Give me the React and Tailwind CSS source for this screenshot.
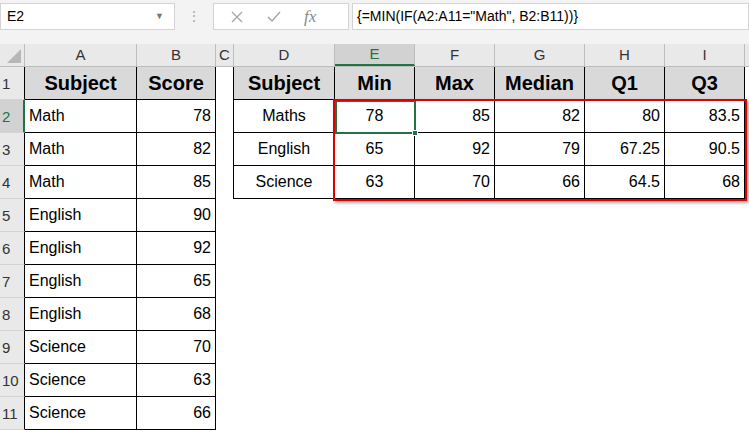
import React from 'react';

const cols = [
  { k: 'A', w: 'w-[112px]' },
  { k: 'B', w: 'w-[79px]' },
  { k: 'C', w: 'w-[18px]' },
  { k: 'D', w: 'w-[101px]' },
  { k: 'E', w: 'w-[80px]' },
  { k: 'F', w: 'w-[80px]' },
  { k: 'G', w: 'w-[90px]' },
  { k: 'H', w: 'w-[80px]' },
  { k: 'I', w: 'w-[80px]' },
];

const left = [
  ['Subject', 'Score'],
  ['Math', 78], ['Math', 82], ['Math', 85], ['English', 90], ['English', 92],
  ['English', 65], ['English', 68], ['Science', 70], ['Science', 63], ['Science', 66],
];

const right = [
  ['Subject', 'Min', 'Max', 'Median', 'Q1', 'Q3'],
  ['Maths', 78, 85, 82, 80, 83.5],
  ['English', 65, 92, 79, 67.25, 90.5],
  ['Science', 63, 70, 66, 64.5, 68],
];

function Cell({ w, children, table, head, align = 'left', extra = '' }) {
  const base = `${w} h-full shrink-0 flex items-center px-1 `;
  const border = table ? 'border-r border-b border-black ' : '';
  const bg = head ? 'bg-[#d9d9d9] font-bold text-[20px] justify-center ' : 'text-[16px] ';
  const al = head ? '' : align === 'right' ? 'justify-end ' : align === 'center' ? 'justify-center ' : '';
  return <div className={base + border + bg + al + extra}>{children}</div>;
}

export default function App() {
  return (
    <div className="w-[749px] h-[434px] bg-white overflow-hidden text-black" style={{ fontFamily: '"Liberation Sans", Arial, sans-serif' }}>
      {/* formula bar */}
      <div className="h-[44px] bg-[#f3f3f3] flex items-start pt-[3px] gap-0">
        <div className="w-[175px] h-[27px] bg-white border border-[#d4d4d4] flex items-center justify-between px-1.5 text-[14px]">
          <span>E2</span>
          <span className="text-[#777] text-[9px] mr-1">▼</span>
        </div>
        <div className="w-[38px] h-[27px] flex items-center justify-center text-[#aaa] text-[14px]">⋮</div>
        <div className="w-[136px] h-[27px] bg-white border border-[#d4d4d4] flex items-center text-[#aaa]">
          <svg className="ml-4" width="14" height="14" viewBox="0 0 14 14"><path d="M2 2l10 10M12 2L2 12" stroke="#a6a6a6" strokeWidth="1.3" /></svg>
          <svg className="ml-[22px]" width="16" height="14" viewBox="0 0 16 14"><path d="M2 7l4 4 8-9" stroke="#a6a6a6" strokeWidth="1.5" fill="none" /></svg>
          <span className="ml-[22px] italic text-[17px] text-[#888]" style={{ fontFamily: '"Liberation Serif", serif' }}>fx</span>
        </div>
        <div className="flex-1 h-[27px] ml-[3px] bg-white border border-[#d4d4d4] flex items-center px-1 text-[14px]">
          {'{=MIN(IF(A2:A11="Math", B2:B11))}'}
        </div>
      </div>
      {/* column headers */}
      <div className="flex h-[23px] bg-[#e9e9e9] border-b border-[#bdbdbd] text-[15px] text-[#333]">
        <div className="w-[25px] shrink-0 border-r border-[#bdbdbd] relative">
          <div className="absolute right-[3px] bottom-[3px] w-0 h-0 border-l-[14px] border-l-transparent border-b-[14px] border-b-[#b7b7b7]" />
        </div>
        {cols.map((c) => (
          <div key={c.k} className={`${c.w} shrink-0 flex items-center justify-center border-r border-[#bdbdbd] ${c.k === 'E' ? 'bg-[#d2d2d2] text-[#217346] border-b-2 border-b-[#217346]' : ''}`}>{c.k}</div>
        ))}
      </div>
      {/* rows */}
      <div className="relative">
        {left.map((l, i) => {
          const r = right[i];
          const head = i === 0;
          return (
            <div key={i} className="flex h-[33px]">
              <div className={`w-[25px] shrink-0 flex items-end pb-1 pl-0.5 text-[15px] border-b border-[#d4d4d4] ${i === 1 ? 'bg-[#d2d2d2] text-[#217346] border-r-2 border-r-[#217346]' : 'bg-[#e9e9e9] text-[#333] border-r border-r-black'}`}>{i + 1}</div>
              <Cell w="w-[112px]" table head={head}>{l[0]}</Cell>
              <Cell w="w-[79px]" table head={head} align="right">{l[1]}</Cell>
              <div className={`w-[18px] shrink-0 h-full ${r ? 'border-r border-black' : ''}`} />
              {r ? (
                <>
                  <Cell w="w-[101px]" table head={head} align="center">{r[0]}</Cell>
                  <Cell w="w-[80px]" table head={head} align="center">{r[1]}</Cell>
                  <Cell w="w-[80px]" table head={head} align="right">{r[2]}</Cell>
                  <Cell w="w-[90px]" table head={head} align="right">{r[3]}</Cell>
                  <Cell w="w-[80px]" table head={head} align="right">{r[4]}</Cell>
                  <Cell w="w-[80px]" table head={head} align="right">{r[5]}</Cell>
                </>
              ) : null}
            </div>
          );
        })}
        {/* selected cell E2 */}
        <div className="absolute left-[335px] top-[33px] w-[81px] h-[34px] border-2 border-[#217346]">
          <div className="absolute -right-[4px] -bottom-[4px] w-[6px] h-[6px] bg-[#217346] border border-white" />
        </div>
        {/* red highlight */}
        <div className="absolute left-[333px] top-[32px] w-[414px] h-[102px] border-2 border-[#e00000] shadow-[2px_2px_3px_rgba(0,0,0,0.35)]" />
      </div>
    </div>
  );
}
